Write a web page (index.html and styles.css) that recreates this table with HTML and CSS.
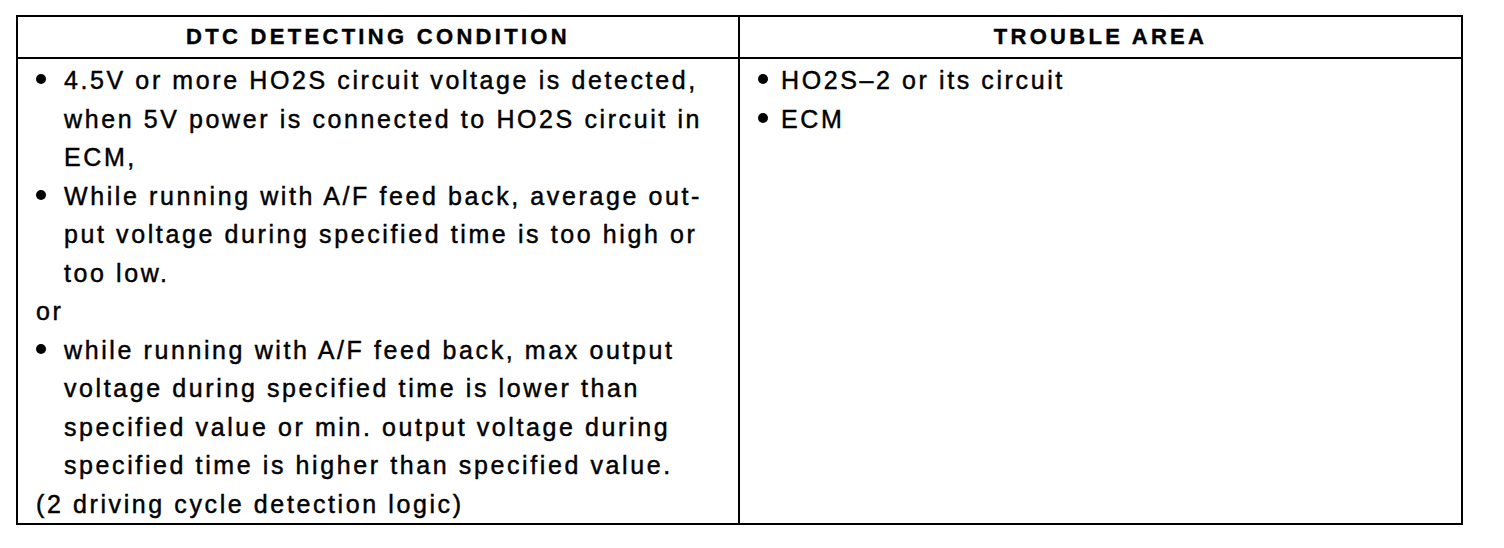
FILE: index.html
```html
<!DOCTYPE html>
<html>
<head>
<meta charset="utf-8">
<link rel="stylesheet" href="styles.css">
</head>
<body>

<table class="dtc">
	<colgroup>
		<col class="c-cond">
		<col class="c-area">
	</colgroup>
	<tr>
		<th>DTC DETECTING CONDITION</th>
		<th>TROUBLE AREA</th>
	</tr>
	<tr>
		<td class="cond">
			<p class="item">4.5V or more HO2S circuit voltage is detected,<br>when 5V power is connected to HO2S circuit in<br>ECM,</p>
			<p class="item">While running with A/F feed back, average out-<br>put voltage during specified time is too high or<br>too low.</p>
			<p class="note">or</p>
			<p class="item">while running with A/F feed back, max output<br>voltage during specified time is lower than<br>specified value or min. output voltage during<br>specified time is higher than specified value.</p>
			<p class="note">(2 driving cycle detection logic)</p>
		</td>
		<td class="area">
			<p class="item">HO2S&ndash;2 or its circuit</p>
			<p class="item">ECM</p>
		</td>
	</tr>
</table>

</body>
</html>
```

FILE: styles.css
```css
body {
	margin: 0;
	background: #fff;
	color: #000;
	font-family: "Liberation Sans", Arial, Helvetica, sans-serif;
}

.dtc {
	border-collapse: collapse;
	table-layout: fixed;
	width: 1447px;
	margin: 15px 0 0 16px;
	border: 2px solid #000;
}
.c-cond {
	width: 722px;
}

.dtc th,
.dtc td {
	border: 2px solid #000;
	padding: 0;
}

.dtc th {
	height: 40px;
	font-size: 22px;
	line-height: 40px;
	font-weight: bold;
	letter-spacing: 3.3px;
	text-align: center;
	-webkit-text-stroke: 0.4px #000;
}

.dtc td {
	vertical-align: top;
	padding: 2px 0 0 18px;
	font-size: 25px;
	line-height: 38.5px;
	letter-spacing: 2.6px;
	-webkit-text-stroke: 0.45px #000;
}

.item,
.note {
	margin: 0;
}
.item {
	display: flex;
}
.item::before {
	content: "";
	flex: none;
	width: 10px;
	height: 10px;
	margin: 13px 18px 0 0;
	border-radius: 50%;
	background: #000;
}
.area .item::before {
	margin-right: 13px;
}
```
